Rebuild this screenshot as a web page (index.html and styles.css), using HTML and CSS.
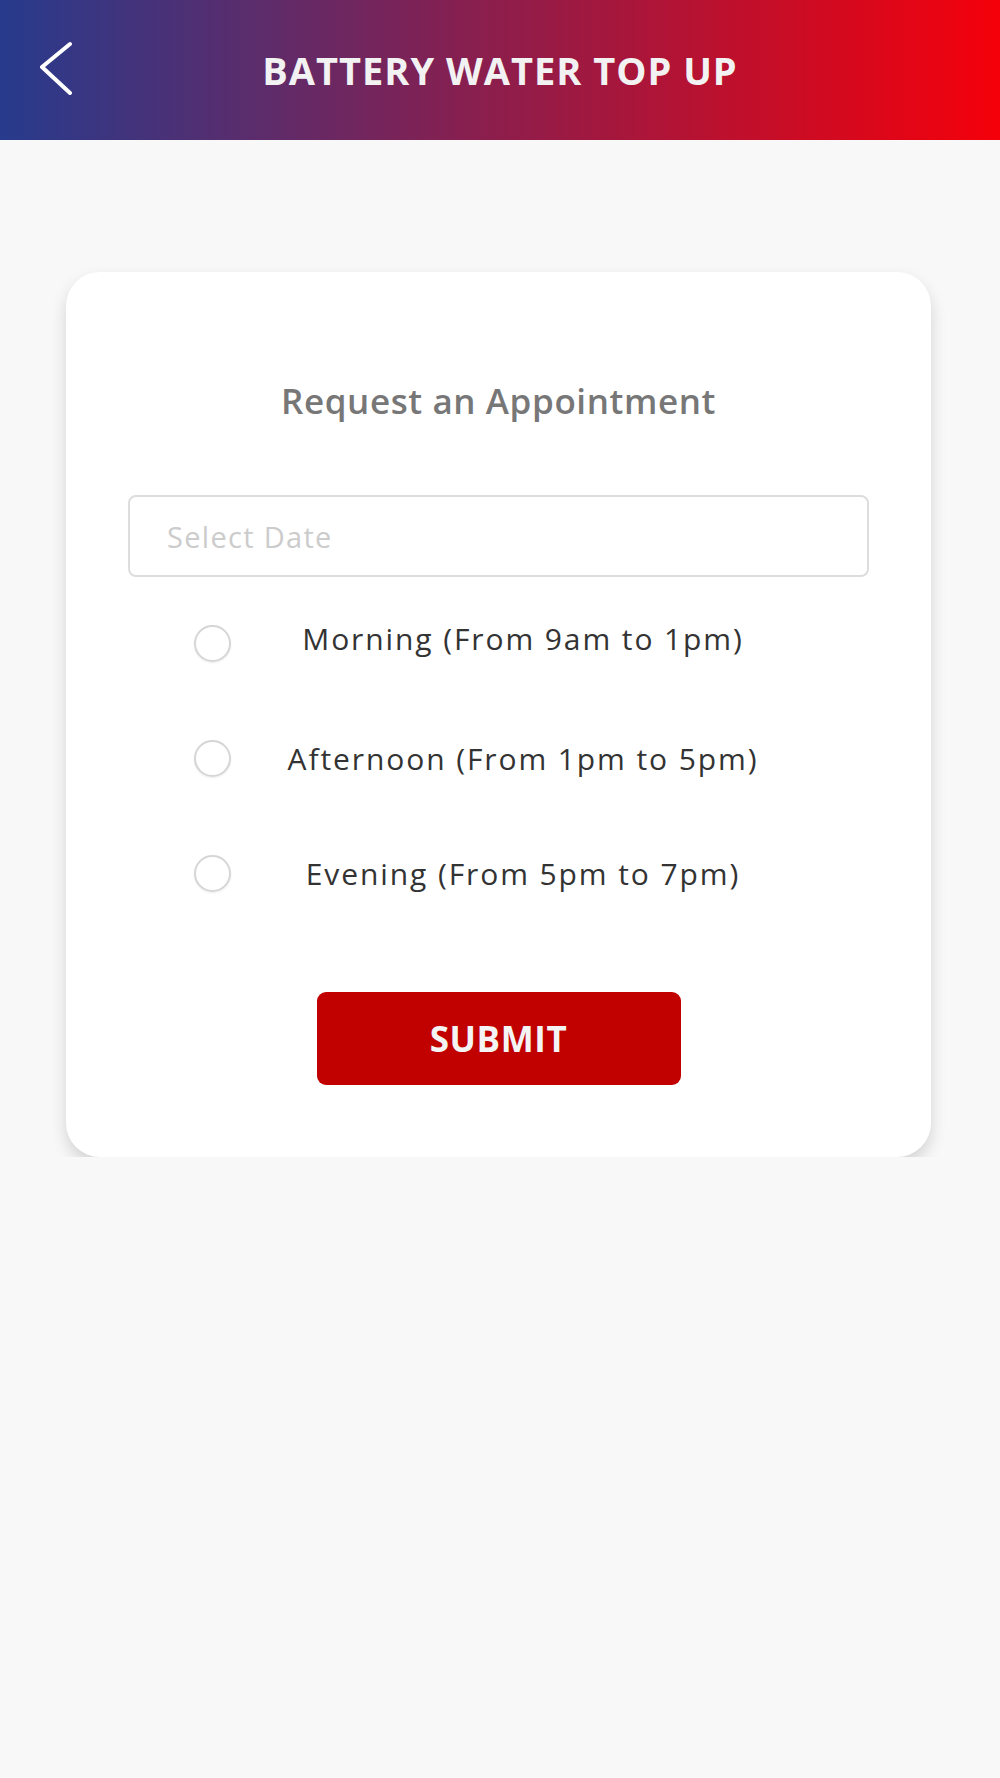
FILE: index.html
```html
<!DOCTYPE html>
<html lang="en">
<head>
    <meta charset="UTF-8">
    <meta name="viewport" content="width=device-width, initial-scale=1.0">
    <title>Battery Water Top Up</title>
    <link rel="stylesheet" href="styles.css">
</head>
<body>

<div class="header">
    <a class="back" href="#">
        <svg width="36" height="54" viewBox="0 0 36 54">
            <polyline points="31,3 3,26 31,52" fill="none" stroke="#ffffff" stroke-width="4" stroke-linecap="round" stroke-linejoin="round"/>
        </svg>
    </a>
    <h1 class="title">BATTERY WATER TOP UP</h1>
    <div></div>
</div>

<div class="card">
    <h2 class="card-title">Request an Appointment</h2>

    <div class="date-input">Select Date</div>

    <div class="options">
        <label class="option">
            <span class="radio"></span>
            <span class="option-text first">Morning (From 9am to 1pm)</span>
        </label>
        <label class="option">
            <span class="radio"></span>
            <span class="option-text">Afternoon (From 1pm to 5pm)</span>
        </label>
        <label class="option">
            <span class="radio"></span>
            <span class="option-text">Evening (From 5pm to 7pm)</span>
        </label>
    </div>

    <div class="actions">
        <button class="button">SUBMIT</button>
    </div>
</div>

</body>
</html>
```

FILE: styles.css
```css
body {
    font-family: "Open Sans", Arial, sans-serif;
    background-color: #f8f8f8;
    margin: 0;
    padding: 0;
}
.header {
    height: 140px;
    display: grid;
    grid-template-columns: 1fr auto 1fr;
    align-items: center;
    background: linear-gradient(to right, #273b8d, #f5000a);
}
.back {
    display: block;
    width: 36px;
    height: 54px;
    margin-left: 39px;
    margin-top: -4px;
}
.title {
    margin: 0;
    color: #f2f2f2;
    font-size: 38px;
    font-weight: 700;
    letter-spacing: 1px;
}
.card {
    margin: 132px 69px 0 66px;
    padding: 111px 62px 72px;
    background-color: #ffffff;
    border-radius: 34px;
    box-shadow: 0 8px 16px rgba(0, 0, 0, 0.15);
}
.card-title {
    margin: 0 0 77px;
    font-size: 35px;
    line-height: 1;
    font-weight: 600;
    color: #777777;
    text-align: center;
    letter-spacing: 0.6px;
}
.date-input {
    height: 78px;
    border: 2px solid #dddddd;
    border-radius: 8px;
    padding-left: 37px;
    display: flex;
    align-items: center;
    font-size: 29px;
    color: #cccccc;
    letter-spacing: 1.3px;
}
.options {
    margin-top: 36px;
    padding: 0 54px 0 66px;
    display: flex;
    flex-direction: column;
    gap: 55px;
}
.option {
    height: 60px;
    display: flex;
    align-items: center;
}
.radio {
    width: 33px;
    height: 33px;
    border: 2px solid #d6d6d6;
    border-radius: 50%;
    box-shadow: 0 1px 2px rgba(0, 0, 0, 0.08);
    flex-shrink: 0;
}
.option-text {
    flex: 1;
    text-align: center;
    font-size: 30px;
    color: #333333;
    letter-spacing: 1.9px;
}
.option-text.first {
    margin-top: -10px;
}
.actions {
    margin-top: 89px;
    display: flex;
    justify-content: center;
}
.button {
    width: 364px;
    height: 93px;
    background-color: #c10000;
    color: #f4f4f4;
    border: none;
    border-radius: 9px;
    font-family: "Open Sans", Arial, sans-serif;
    font-size: 35px;
    font-weight: 700;
    letter-spacing: 0.6px;
    cursor: pointer;
}
```
